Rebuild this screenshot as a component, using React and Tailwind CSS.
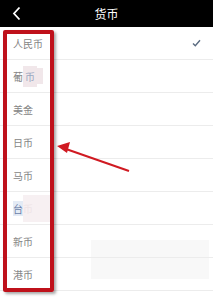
import React from "react";

const rows = ["人民币", "葡币", "美金", "日币", "马币", "台币", "新币", "港币"];

function Label({ text, i }) {
  if (i === 1) {
    return (
      <span className="flex items-center">
        <span>葡</span>
        <span className="bg-[#f1e7ea] text-[#9aa6c0] px-[2px] py-[3px]">币</span>
        <span className="w-[6px] h-[16px] bg-[#f1e7ea]" />
      </span>
    );
  }
  if (i === 5) {
    return (
      <span className="flex items-center">
        <span className="bg-[#e4ebf5] text-[#6b7fa8]">台</span>
        <span className="text-[#eee4e7] bg-[#f7f0f2] pr-[18px] py-[6px]">币</span>
      </span>
    );
  }
  return <span>{text}</span>;
}

export default function App() {
  return (
    <div
      className="relative w-[213px] h-[300px] overflow-hidden bg-white"
      style={{ fontFamily: '"Noto Sans CJK SC", "Noto Sans", sans-serif' }}
    >
      <div className="h-[27px] bg-black flex items-center px-[12px]">
        <svg width="10" height="15" viewBox="0 0 10 15">
          <path d="M7.5 1.5 L2 7.5 L7.5 13.5" fill="none" stroke="#fff" strokeWidth="1.8" />
        </svg>
        <div className="flex-1 text-center text-white text-[12px] leading-none pr-[10px]">货币</div>
      </div>
      <div className="flex flex-col">
        {rows.map((r, i) => (
          <div
            key={r}
            className="h-[33px] border-b border-[#ececec] flex items-center pl-[13px] pr-[12px] text-[10px] text-[#858585]"
          >
            <Label text={r} i={i} />
            {i === 0 && (
              <svg className="ml-auto" width="9" height="8" viewBox="0 0 9 8">
                <path d="M1 4.5 L3.3 6.8 L8 1.2" fill="none" stroke="#5a6b80" strokeWidth="1.4" />
              </svg>
            )}
            {(i === 6 || i === 7) && (
              <div className={`ml-auto -mr-[8px] w-[118px] bg-[#f8f8f8] ${i === 6 ? "h-[17px] self-end" : "h-[21px] self-start"}`} />
            )}
          </div>
        ))}
      </div>
      <div className="absolute left-[3px] top-[30px] w-[51px] h-[262px] border-[4px] border-[#bf111b] rounded-[2px] shadow-[2px_2px_3px_rgba(0,0,0,0.35)]" />
      <svg className="absolute left-0 top-0" width="213" height="300" viewBox="0 0 213 300">
        <line x1="129" y1="171" x2="66" y2="149" stroke="#d01a22" strokeWidth="2" />
        <polygon points="57,146 70,142 67,153" fill="#d01a22" />
      </svg>
    </div>
  );
}
